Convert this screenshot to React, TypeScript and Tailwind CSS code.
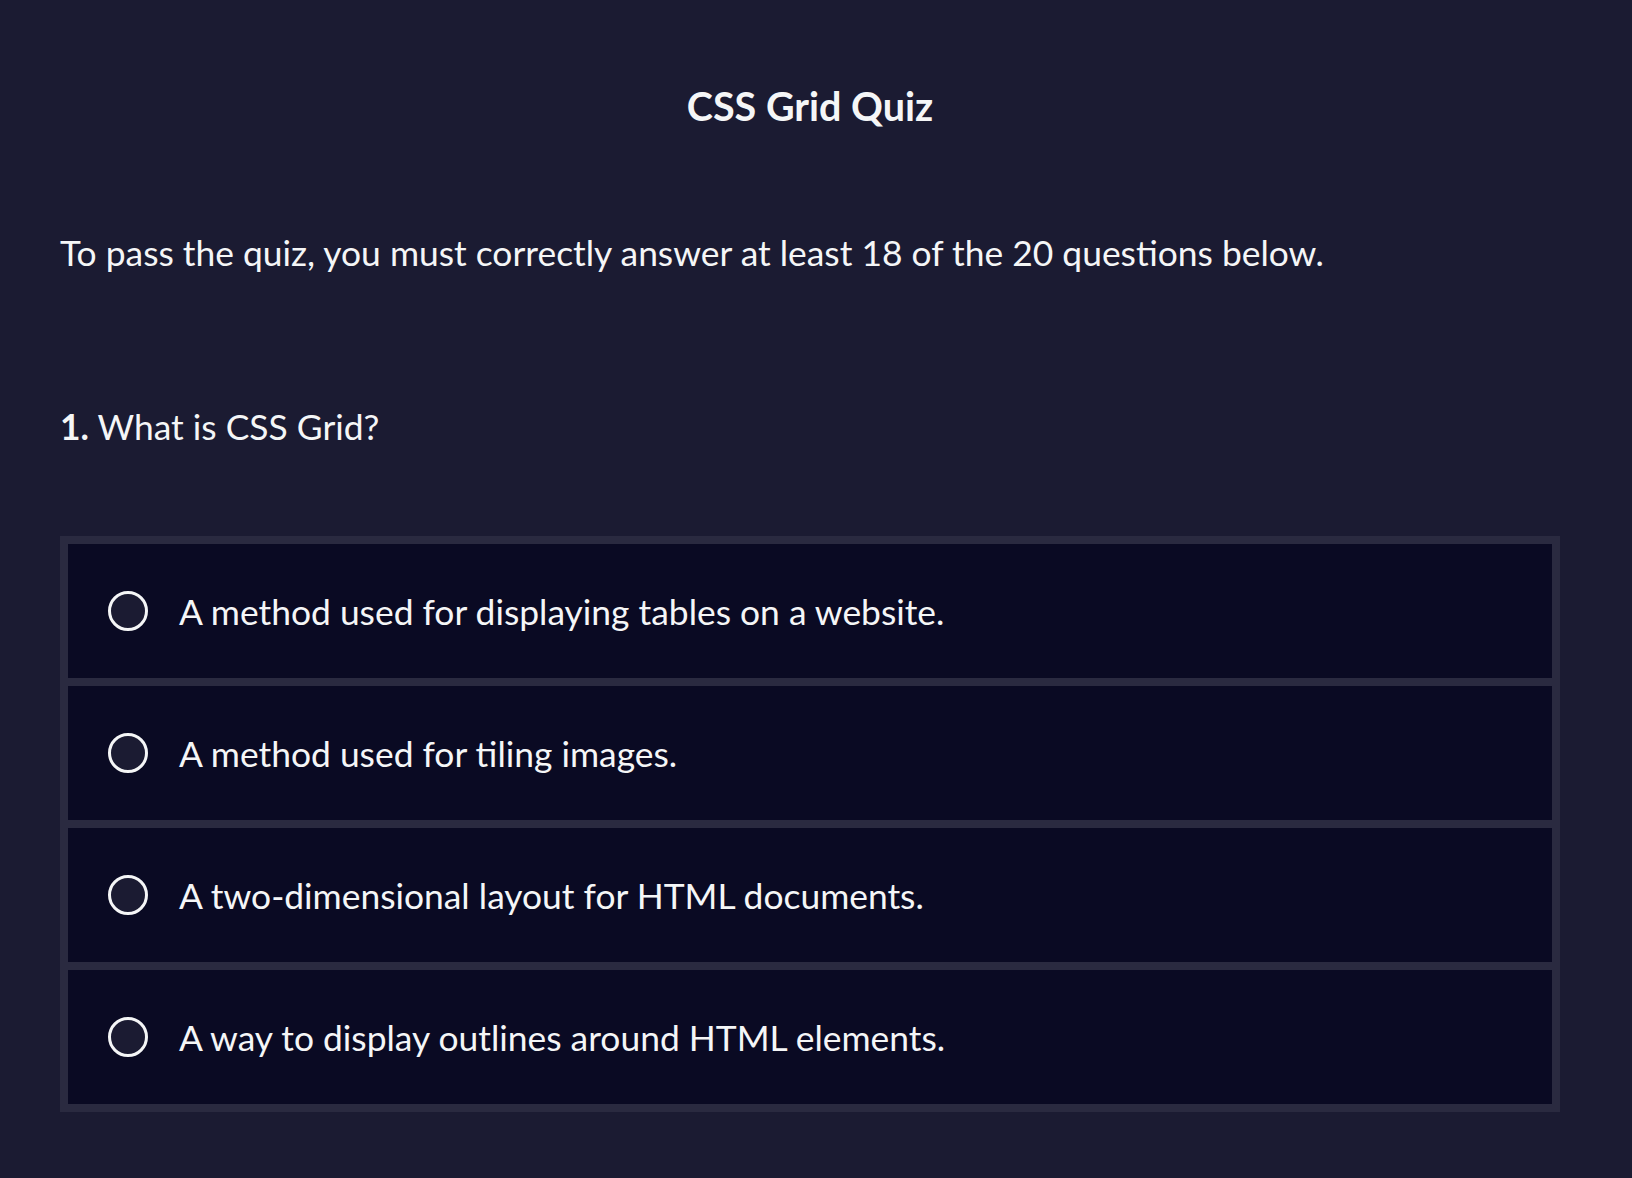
import React from "react";

const options = [
  "A method used for displaying tables on a website.",
  "A method used for tiling images.",
  "A two-dimensional layout for HTML documents.",
  "A way to display outlines around HTML elements.",
];

export default function App() {
  return (
    <div
      className="min-h-screen bg-[#1b1b32] text-[#f5f6f7] pl-[60px] pr-[72px] pb-[66px]"
      style={{ fontFamily: "Lato, 'Noto Sans', sans-serif" }}
    >
      <h1 className="pt-[82px] text-center text-[39.5px] leading-[48px] font-bold">
        CSS Grid Quiz
      </h1>
      <p className="mt-[97px] text-[35.4px] leading-[51px]">
        To pass the quiz, you must correctly answer at least 18 of the 20 questions below.
      </p>
      <p className="mt-[123px] text-[35.4px] leading-[51px]">
        <span className="font-bold">1.</span> What is CSS Grid?
      </p>
      <div className="mt-[84px] w-full border-[8px] border-[#2a2a40] bg-[#2a2a40] flex flex-col gap-[8px]">
        {options.map((o) => (
          <label
            key={o}
            className="h-[134px] bg-[#0a0a23] flex items-center pl-[40px] cursor-pointer"
          >
            <span className="w-[40px] h-[40px] rounded-full border-[3px] border-[#f5f6f7] bg-[#1b1b32] shrink-0" />
            <span className="ml-[31px] text-[35.4px] leading-[51px]">{o}</span>
          </label>
        ))}
      </div>
    </div>
  );
}
